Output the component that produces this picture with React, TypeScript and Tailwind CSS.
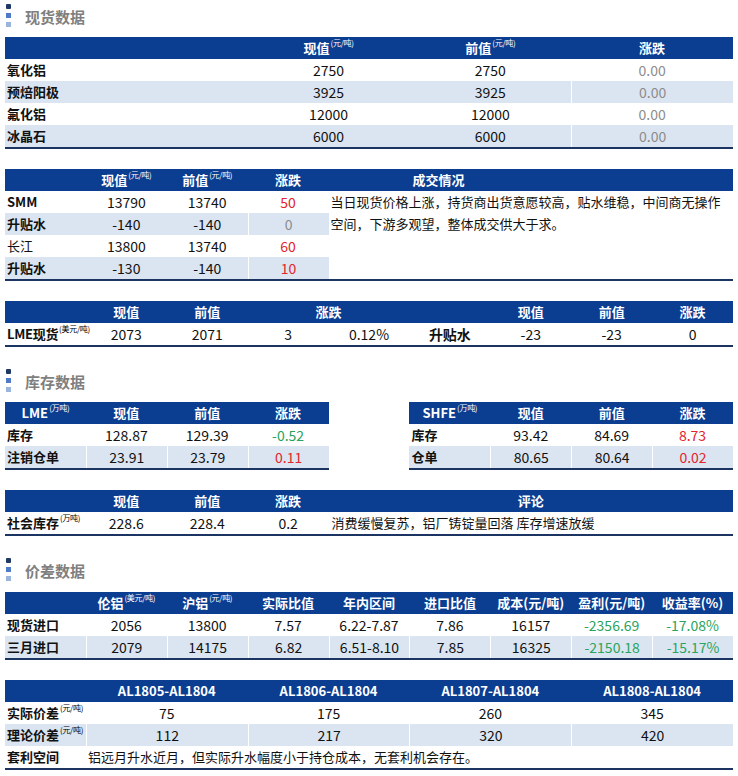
import React from "react";

const F = { fontFamily: "'Noto Sans CJK SC', 'Noto Sans', sans-serif" };

function Title({ text }: { text: string }) {
  return (
    <div className="flex h-[33px] items-start">
      <div className="flex flex-col gap-[4px] pl-[1px]">
        <div className="w-[5px] h-[5px] rounded-[1px] bg-[#1f3864]" />
        <div className="w-[5px] h-[5px] bg-[#4f7ac6]" />
        <div className="w-[5px] h-[5px] bg-[#9ab4dc]" />
      </div>
      <div className="ml-[14px] mt-[3px] text-[15px] leading-[20px] font-bold text-[#7f7f7f]">{text}</div>
    </div>
  );
}

function Sup({ t, dark }: { t: string; dark?: boolean }) {
  return (
    <span className={"text-[8px] leading-none font-normal relative -top-[5px] ml-[1px] tracking-[-0.3px] " + (dark ? "text-black" : "text-white")}>{t}</span>
  );
}

const H = "h-[22px] flex items-center justify-center whitespace-nowrap text-white font-bold text-[13px] bg-[#0b3d91]";
const C = "h-[22px] flex items-center justify-center whitespace-nowrap text-[14px]";
const L = "h-[22px] flex items-center whitespace-nowrap pl-[2px] text-[13px] font-bold";
const LN = "h-[22px] flex items-center whitespace-nowrap pl-[2px] text-[13px]";
const BG = " bg-[#dbe5f1]";
const SEP = " border-l border-white";
const RED = " text-[#e3242b]";
const GRN = " text-[#2aa45c]";
const GRY = " text-[#8c8c8c]";
const BB = "border-b-2 border-[#1c3461]";

export default function App() {
  return (
    <div style={F} className="w-[738px] bg-white px-[5px] pt-[4px] pb-[4px] text-[#111]">
      <Title text="现货数据" />
      {/* Table 1 */}
      <div className={"grid grid-cols-9 " + BB}>
        <div className={H + " col-span-3"}></div>
        <div className={H + " col-span-2"}>现值<Sup t="(元/吨)" /></div>
        <div className={H + " col-span-2"}>前值<Sup t="(元/吨)" /></div>
        <div className={H + " col-span-2"}>涨跌</div>

        <div className={L + " col-span-3"}>氧化铝</div>
        <div className={C + " col-span-2"}>2750</div>
        <div className={C + " col-span-2"}>2750</div>
        <div className={C + " col-span-2" + GRY}>0.00</div>

        <div className={L + " col-span-3" + BG}>预焙阳极</div>
        <div className={C + " col-span-2" + BG}>3925</div>
        <div className={C + " col-span-2" + BG}>3925</div>
        <div className={C + " col-span-2" + BG + SEP + GRY}>0.00</div>

        <div className={L + " col-span-3"}>氟化铝</div>
        <div className={C + " col-span-2"}>12000</div>
        <div className={C + " col-span-2"}>12000</div>
        <div className={C + " col-span-2" + GRY}>0.00</div>

        <div className={L + " col-span-3" + BG}>冰晶石</div>
        <div className={C + " col-span-2" + BG}>6000</div>
        <div className={C + " col-span-2" + BG}>6000</div>
        <div className={C + " col-span-2" + BG + SEP + GRY}>0.00</div>
      </div>

      {/* Table 2 */}
      <div className={"mt-[20px] grid grid-cols-9 " + BB}>
        <div className={H}></div>
        <div className={H}>现值<Sup t="(元/吨)" /></div>
        <div className={H}>前值<Sup t="(元/吨)" /></div>
        <div className={H}>涨跌</div>
        <div className={H + " col-span-5 !justify-start pl-[84px]"}>成交情况</div>

        <div className="col-span-4 grid grid-cols-4">
          <div className={L}>SMM</div>
          <div className={C}>13790</div>
          <div className={C}>13740</div>
          <div className={C + RED}>50</div>

          <div className={L + BG}>升贴水</div>
          <div className={C + BG}>-140</div>
          <div className={C + BG}>-140</div>
          <div className={C + BG + SEP + GRY}>0</div>

          <div className={LN}>长江</div>
          <div className={C}>13800</div>
          <div className={C}>13740</div>
          <div className={C + RED}>60</div>

          <div className={L + BG}>升贴水</div>
          <div className={C + BG}>-130</div>
          <div className={C + BG}>-140</div>
          <div className={C + BG + SEP + RED}>10</div>
        </div>
        <div className="col-span-5 pl-[2px] text-[13px] leading-[22px]">
          当日现货价格上涨，持货商出货意愿较高，贴水维稳，中间商无操作
          <br />
          空间，下游多观望，整体成交供大于求。
        </div>
      </div>

      {/* Table 3 */}
      <div className={"mt-[20px] grid grid-cols-9 " + BB}>
        <div className={H}></div>
        <div className={H}>现值</div>
        <div className={H}>前值</div>
        <div className={H + " col-span-2"}>涨跌</div>
        <div className={H}></div>
        <div className={H}>现值</div>
        <div className={H}>前值</div>
        <div className={H}>涨跌</div>

        <div className={L + " tracking-[-0.3px]"}>LME现货<Sup t="(美元/吨)" dark /></div>
        <div className={C}>2073</div>
        <div className={C}>2071</div>
        <div className={C}>3</div>
        <div className={C}>0.12%</div>
        <div className={C + " text-[13px] font-bold"}>升贴水</div>
        <div className={C}>-23</div>
        <div className={C}>-23</div>
        <div className={C}>0</div>
      </div>

      <div className="mt-[22px]">
        <Title text="库存数据" />
      </div>

      <div className="grid grid-cols-9">
        <div className={"col-span-4 grid grid-cols-4 " + BB}>
          <div className={H}>LME<Sup t="(万吨)" /></div>
          <div className={H}>现值</div>
          <div className={H}>前值</div>
          <div className={H}>涨跌</div>

          <div className={L}>库存</div>
          <div className={C}>128.87</div>
          <div className={C}>129.39</div>
          <div className={C + GRN}>-0.52</div>

          <div className={L + BG}>注销仓单</div>
          <div className={C + BG + SEP}>23.91</div>
          <div className={C + BG + SEP}>23.79</div>
          <div className={C + BG + SEP + RED}>0.11</div>
        </div>
        <div className={"col-start-6 col-span-4 grid grid-cols-4 " + BB}>
          <div className={H}>SHFE<Sup t="(万吨)" /></div>
          <div className={H}>现值</div>
          <div className={H}>前值</div>
          <div className={H}>涨跌</div>

          <div className={L}>库存</div>
          <div className={C}>93.42</div>
          <div className={C}>84.69</div>
          <div className={C + RED}>8.73</div>

          <div className={L + BG}>仓单</div>
          <div className={C + BG + SEP}>80.65</div>
          <div className={C + BG + SEP}>80.64</div>
          <div className={C + BG + SEP + RED}>0.02</div>
        </div>
      </div>

      {/* Social inventory */}
      <div className={"mt-[20px] grid grid-cols-9 " + BB}>
        <div className={H}></div>
        <div className={H}>现值</div>
        <div className={H}>前值</div>
        <div className={H}>涨跌</div>
        <div className={H + " col-span-5"}>评论</div>

        <div className={L}>社会库存<Sup t="(万吨)" dark /></div>
        <div className={C}>228.6</div>
        <div className={C}>228.4</div>
        <div className={C}>0.2</div>
        <div className={LN + " col-span-5 pl-[3px]"}>消费缓慢复苏，铝厂铸锭量回落 库存增速放缓</div>
      </div>

      <div className="mt-[22px]">
        <Title text="价差数据" />
      </div>

      {/* Spread */}
      <div className={"mt-[1px] grid grid-cols-9 " + BB}>
        <div className={H}></div>
        <div className={H}>伦铝<Sup t="(美元/吨)" /></div>
        <div className={H}>沪铝<Sup t="(元/吨)" /></div>
        <div className={H}>实际比值</div>
        <div className={H}>年内区间</div>
        <div className={H}>进口比值</div>
        <div className={H}>成本(元/吨)</div>
        <div className={H}>盈利(元/吨)</div>
        <div className={H}>收益率(%)</div>

        <div className={L}>现货进口</div>
        <div className={C}>2056</div>
        <div className={C}>13800</div>
        <div className={C}>7.57</div>
        <div className={C}>6.22-7.87</div>
        <div className={C}>7.86</div>
        <div className={C}>16157</div>
        <div className={C + GRN}>-2356.69</div>
        <div className={C + GRN}>-17.08%</div>

        <div className={L + BG}>三月进口</div>
        <div className={C + BG + SEP}>2079</div>
        <div className={C + BG + SEP}>14175</div>
        <div className={C + BG + SEP}>6.82</div>
        <div className={C + BG + SEP}>6.51-8.10</div>
        <div className={C + BG + SEP}>7.85</div>
        <div className={C + BG + SEP}>16325</div>
        <div className={C + BG + SEP + GRN}>-2150.18</div>
        <div className={C + BG + SEP + GRN}>-15.17%</div>
      </div>

      {/* AL spreads */}
      <div className={"mt-[20px] grid grid-cols-9 " + BB}>
        <div className={H}></div>
        <div className={H + " col-span-2"}>AL1805-AL1804</div>
        <div className={H + " col-span-2"}>AL1806-AL1804</div>
        <div className={H + " col-span-2"}>AL1807-AL1804</div>
        <div className={H + " col-span-2"}>AL1808-AL1804</div>

        <div className={L}>实际价差<Sup t="(元/吨)" dark /></div>
        <div className={C + " col-span-2"}>75</div>
        <div className={C + " col-span-2"}>175</div>
        <div className={C + " col-span-2"}>260</div>
        <div className={C + " col-span-2"}>345</div>

        <div className={L + BG}>理论价差<Sup t="(元/吨)" dark /></div>
        <div className={C + " col-span-2" + BG + SEP}>112</div>
        <div className={C + " col-span-2" + BG + SEP}>217</div>
        <div className={C + " col-span-2" + BG + SEP}>320</div>
        <div className={C + " col-span-2" + BG + SEP}>420</div>

        <div className={L}>套利空间</div>
        <div className={LN + " col-span-8"}>铝远月升水近月，但实际升水幅度小于持仓成本，无套利机会存在。</div>
      </div>
    </div>
  );
}
